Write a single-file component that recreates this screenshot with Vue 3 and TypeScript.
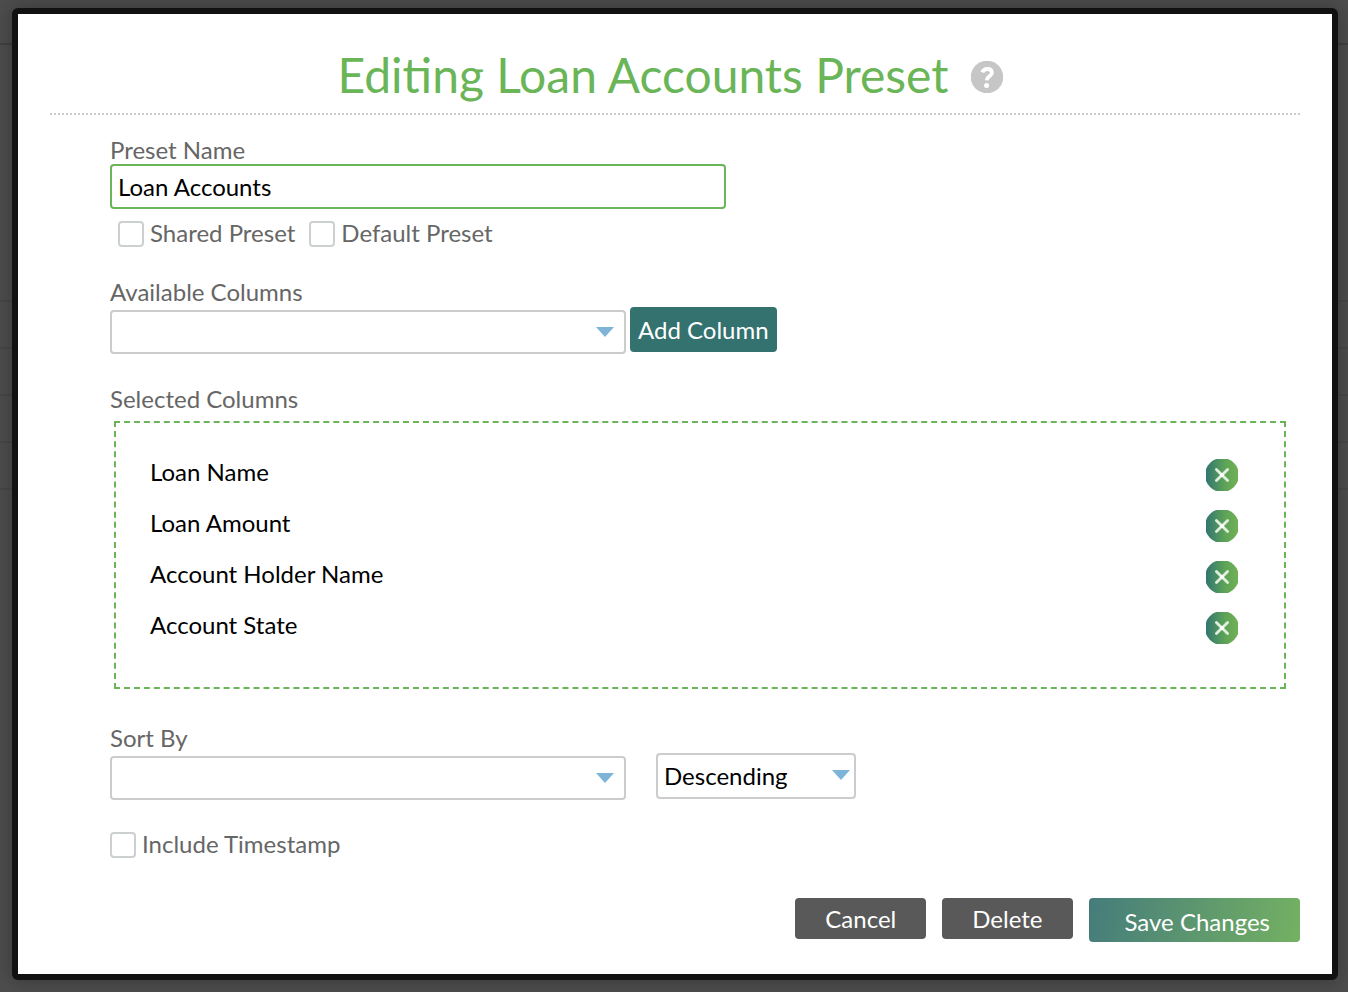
<script setup lang="ts">
import { ref } from 'vue'

const presetName = ref('Loan Accounts')
const shared = ref(false)
const isDefault = ref(false)
const includeTimestamp = ref(false)
const available = ref('')
const sortBy = ref('')
const sortOrder = ref('Descending')
const allColumns: string[] = ['Loan Name', 'Loan Amount', 'Account Holder Name', 'Account State']
const selected = ref<string[]>([...allColumns])

function addColumn(): void {
  if (available.value && !selected.value.includes(available.value)) {
    selected.value.push(available.value)
  }
}

function removeColumn(name: string): void {
  selected.value = selected.value.filter((column) => column !== name)
}
</script>

<template>
  <div class="page">
    <div class="backdrop" aria-hidden="true">
      <div class="backdrop-head"></div>
      <div class="backdrop-body"></div>
      <div v-for="n in 4" :key="n" class="backdrop-row"></div>
    </div>

    <main class="dialog" role="dialog" aria-labelledby="dialog-title">
      <header class="header">
        <h1 id="dialog-title">Editing Loan Accounts Preset</h1>
        <button class="icon-button" type="button" aria-label="Help">
          <svg viewBox="0 0 32 32" width="32" height="32">
            <circle cx="16" cy="16" r="16.3" fill="#c6c6c6" />
            <path d="M11.3 11.4C12.2 9 14 8 16.3 8C19.1 8 20.9 9.5 20.9 11.9C20.9 15 16 15.3 15.7 19.4" fill="none" stroke="#fff" stroke-width="3.8" stroke-linejoin="round" />
            <circle cx="15.6" cy="24.6" r="2.5" fill="#fff" />
          </svg>
        </button>
      </header>

      <form class="form" @submit.prevent>
        <section class="fields">
          <label class="label" for="preset-name">Preset Name</label>
          <input id="preset-name" v-model="presetName" class="text-input" type="text" />
          <div class="checks">
            <label class="check"><input v-model="shared" type="checkbox" /><span>Shared Preset</span></label>
            <label class="check"><input v-model="isDefault" type="checkbox" /><span>Default Preset</span></label>
          </div>
        </section>

        <section class="fields available">
          <label class="label" for="available">Available Columns</label>
          <div class="row add-row">
            <div class="select wide">
              <select id="available" v-model="available">
                <option value=""></option>
                <option v-for="c in allColumns" :key="c">{{ c }}</option>
              </select>
              <svg class="arrow" viewBox="0 0 18 10" width="18" height="10"><path d="M0 0H18L9 10Z" fill="#7db4d8" /></svg>
            </div>
            <button class="add" type="button" @click="addColumn">Add Column</button>
          </div>
        </section>

        <section class="fields chosen">
          <h2 class="label">Selected Columns</h2>
          <ul class="columns">
            <li v-for="c in selected" :key="c">
              <span>{{ c }}</span>
              <button class="icon-button" type="button" :aria-label="`Remove ${c}`" @click="removeColumn(c)">
                <svg viewBox="0 0 32 32" width="32" height="32">
                  <defs>
                    <linearGradient id="remove-fill" x1="0" x2="1" y1="0" y2="0">
                      <stop offset="0" stop-color="#2f7472" />
                      <stop offset="0.6" stop-color="#5fa457" />
                      <stop offset="1" stop-color="#72b255" />
                    </linearGradient>
                  </defs>
                  <circle cx="16" cy="16" r="17" fill="url(#remove-fill)" />
                  <path d="M10.4 10.4L21.6 21.6M21.6 10.4L10.4 21.6" stroke="#e0eedd" stroke-width="2.8" stroke-linecap="round" />
                  <circle cx="16" cy="16" r="2" fill="#fff" />
                </svg>
              </button>
            </li>
          </ul>
        </section>

        <section class="fields sort">
          <label class="label" for="sort-by">Sort By</label>
          <div class="row sort-row">
            <div class="select wide">
              <select id="sort-by" v-model="sortBy">
                <option value=""></option>
                <option v-for="c in selected" :key="c">{{ c }}</option>
              </select>
              <svg class="arrow" viewBox="0 0 18 10" width="18" height="10"><path d="M0 0H18L9 10Z" fill="#7db4d8" /></svg>
            </div>
            <div class="select order">
              <select v-model="sortOrder" aria-label="Sort order">
                <option>Descending</option>
                <option>Ascending</option>
              </select>
              <svg class="arrow" viewBox="0 0 18 10" width="18" height="10"><path d="M0 0H18L9 10Z" fill="#7db4d8" /></svg>
            </div>
          </div>
          <label class="check timestamp"><input v-model="includeTimestamp" type="checkbox" /><span>Include Timestamp</span></label>
        </section>

        <footer class="actions">
          <button class="plain" type="button">Cancel</button>
          <button class="plain" type="button">Delete</button>
          <button class="save" type="submit">Save Changes</button>
        </footer>
      </form>
    </main>
  </div>
</template>

<style>
body {
  margin: 0;
  background: #4d4d4d;
}
</style>

<style scoped>
.page {
  position: relative;
  box-sizing: border-box;
  min-height: 100vh;
  padding: 8px 10px 12px 12px;
  background: #4d4d4d;
  font-family: Lato, "Liberation Sans", sans-serif;
  font-size: 24px;
  line-height: 30px;
  color: #000;
}
.page *,
.page *::before {
  box-sizing: border-box;
}
.backdrop {
  position: absolute;
  inset: 0;
}
.backdrop-head {
  height: 45px;
  border-bottom: 2px solid #404040;
}
.backdrop-body {
  height: 257px;
  border-bottom: 2px solid #474747;
}
.backdrop-row {
  height: 47px;
  border-bottom: 2px solid #474747;
}
.dialog {
  position: relative;
  padding: 32px;
  border: 6px solid #111;
  border-radius: 6px;
  background: #fff;
  box-shadow: 0 0 20px rgba(0, 0, 0, 0.3);
}
button,
input,
select {
  margin: 0;
  font: inherit;
}
button {
  border: 0;
  color: #fff;
  cursor: pointer;
}
.header {
  display: flex;
  justify-content: center;
  align-items: center;
  gap: 22px;
  height: 69px;
  padding: 0 10px 6px 0;
  border-bottom: 2px dotted #ccc;
}
h1 {
  margin: 0;
  padding-bottom: 4px;
  font-size: 48px;
  line-height: 56px;
  font-weight: 400;
  color: #6ab557;
}
.icon-button {
  display: block;
  width: 32px;
  height: 32px;
  padding: 0;
  background: none;
}
.icon-button svg {
  display: block;
}
.form {
  padding-top: 21px;
}
.fields {
  margin-left: 60px;
}
.label {
  display: block;
  margin: 0;
  font-size: 24px;
  line-height: 28px;
  font-weight: 400;
  color: #666;
}
.text-input {
  display: block;
  width: 616px;
  max-width: 100%;
  height: 45px;
  padding: 0 6px;
  border: 2px solid #6ab557;
  border-radius: 4px;
  background: #fff;
  outline: 0;
}
.checks {
  display: flex;
  gap: 14px;
  margin: 9px 8px 0;
}
.check {
  display: flex;
  align-items: center;
  gap: 6px;
  color: #666;
}
.check span {
  padding-bottom: 2px;
}
.check input {
  appearance: none;
  width: 26px;
  height: 26px;
  border: 2px solid #ccd0d0;
  border-radius: 4px;
  background: #fff;
}
.check input:checked {
  background: #6ab557;
}
.available {
  margin-top: 28px;
}
.row {
  display: flex;
  align-items: flex-start;
  margin-top: 1px;
}
.add-row {
  gap: 4px;
}
.select {
  position: relative;
}
.wide {
  width: 516px;
  height: 44px;
}
.select select {
  appearance: none;
  display: block;
  width: 100%;
  height: 100%;
  padding: 0 30px 0 6px;
  border: 2px solid #ccc;
  border-radius: 4px;
  background: #fff;
  color: #000;
}
.arrow {
  position: absolute;
  top: 17px;
  right: 12px;
  pointer-events: none;
}
.row .wide {
  margin-top: 3px;
}
.add {
  height: 45px;
  padding: 0 8px;
  border-radius: 4px;
  background: #33726f;
}
.chosen {
  margin-top: 31px;
}
.columns {
  margin: 8px 14px 0 4px;
  padding: 26px 46px 34px 34px;
  border: 2px dashed #6ab557;
  list-style: none;
}
.columns li {
  display: flex;
  justify-content: space-between;
  align-items: center;
  height: 51px;
}
.columns li span {
  padding-bottom: 6px;
}
.sort {
  margin-top: 35px;
}
.sort-row {
  gap: 30px;
}
.order {
  width: 200px;
  height: 46px;
}
.order .arrow {
  right: 6px;
}
.timestamp {
  margin-top: 29px;
}
.actions {
  display: flex;
  justify-content: flex-end;
  align-items: flex-start;
  gap: 16px;
  margin-top: 37px;
}
.plain {
  height: 41px;
  padding: 0 30px;
  border-radius: 4px;
  background: #595959;
}
.save {
  height: 44px;
  padding: 3px 30px 0 36px;
  border-radius: 4px;
  background: linear-gradient(100deg, #457c7b, #74b162);
}
</style>
